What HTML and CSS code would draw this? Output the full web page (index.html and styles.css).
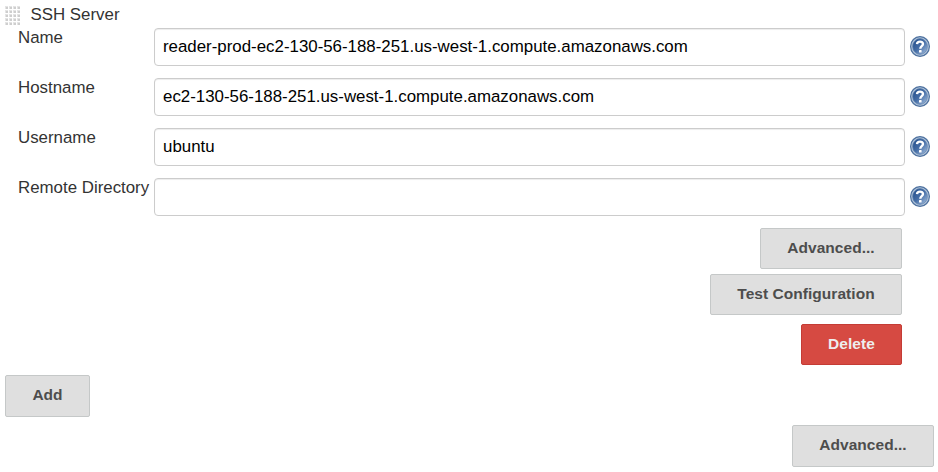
FILE: index.html
```html
<!DOCTYPE html>
<html lang="en">
<head>
<meta charset="utf-8">
<title>SSH Servers</title>
<link rel="stylesheet" href="styles.css">
</head>
<body>
<svg class="defs" width="0" height="0" aria-hidden="true">
  <defs>
    <linearGradient id="disc" x1="0" y1="0" x2="1" y2="1"><stop offset="0" stop-color="#1f4a88"/><stop offset=".5" stop-color="#456da6"/><stop offset="1" stop-color="#a9c3e2"/></linearGradient>
    <symbol id="help" viewBox="0 0 20 21">
      <ellipse cx="10" cy="10.5" rx="9.4" ry="9.9" fill="#b3c5dc" stroke="#4d719f" stroke-width="1.2"/>
      <ellipse cx="10" cy="10.5" rx="7.4" ry="7.9" fill="url(#disc)" stroke="#6485ad" stroke-width=".7"/>
      <path d="M7 8.1C7.2 4.8 13 4.8 13 8C13 10.2 10.3 10.2 10.3 12.7" fill="none" stroke="#fff" stroke-width="2.4"/>
      <rect x="9" y="14" width="2.6" height="2.5" rx=".6" fill="#fff"/>
    </symbol>
    <pattern id="dots" width="4" height="4" patternUnits="userSpaceOnUse"><rect width="3" height="3" fill="#e4e4e4"/><rect x="1" y="1" width="2" height="2" fill="#cecece"/></pattern>
  </defs>
</svg>
<main class="server">
  <header class="heading"><svg class="grip" width="15" height="19"><rect width="15" height="19" fill="url(#dots)"/></svg><span>SSH Server</span></header>
  <div class="row"><label for="name">Name</label><input id="name" value="reader-prod-ec2-130-56-188-251.us-west-1.compute.amazonaws.com"><svg class="help"><use href="#help"/></svg></div>
  <div class="row"><label for="host">Hostname</label><input id="host" value="ec2-130-56-188-251.us-west-1.compute.amazonaws.com"><svg class="help"><use href="#help"/></svg></div>
  <div class="row"><label for="user">Username</label><input id="user" value="ubuntu"><svg class="help"><use href="#help"/></svg></div>
  <div class="row"><label for="dir">Remote Directory</label><input id="dir"><svg class="help"><use href="#help"/></svg></div>
  <div class="actions">
    <button class="advanced">Advanced...</button>
    <button class="test">Test Configuration</button>
    <button class="delete">Delete</button>
  </div>
</main>
<footer class="footer">
  <button class="add">Add</button>
  <button class="advanced outer">Advanced...</button>
</footer>
</body>
</html>
```
FILE: styles.css
```css
* { box-sizing: border-box; }
body { margin: 0; background: #fff; color: #333; font: 16.88px/20px "Liberation Sans", Arial, sans-serif; overflow: hidden; }
.defs { position: absolute; }
.server { padding-top: 5px; }
.heading { display: flex; height: 23px; padding-left: 5px; gap: 10.5px; }
.heading span { line-height: 19px; }
.grip { margin-top: 1px; }
.row { display: grid; grid-template-columns: 136px 751px 20px; column-gap: 0; height: 50px; padding-left: 18px; align-items: start; }
.row label { white-space: nowrap; line-height: 19px; }
.row input { width: 751px; height: 38px; margin: 0; padding: 0 8px; border: 1px solid #ccc; border-radius: 4px; background: #fff; color: #000; font: inherit; box-shadow: inset 0 1px 1px rgba(0,0,0,.075); outline: none; }
.row .help { width: 20px; height: 21px; margin: 8px 0 0 5px; }
.actions { display: flex; flex-direction: column; align-items: flex-end; padding-right: 36px; }
button { display: block; height: 41px; padding: 0 0 2px; border: 1px solid #c5c8c8; border-radius: 2px; background: #dfdfdf; color: #4d4d4d; font: bold 15.49px/20px "Liberation Sans", Arial, sans-serif; letter-spacing: .05px; text-align: center; }
.advanced { width: 142px; }
.test { width: 192px; margin-top: 5px; }
.delete { width: 101px; margin-top: 9px; border-color: #c43c35; background: #d64a42; color: #eee; }
.footer { display: flex; flex-direction: column; align-items: flex-start; padding: 10px 4px 0 5px; }
.footer button { height: 42px; }
.add { width: 85px; }
.outer { align-self: flex-end; margin-top: 8px; }
```
